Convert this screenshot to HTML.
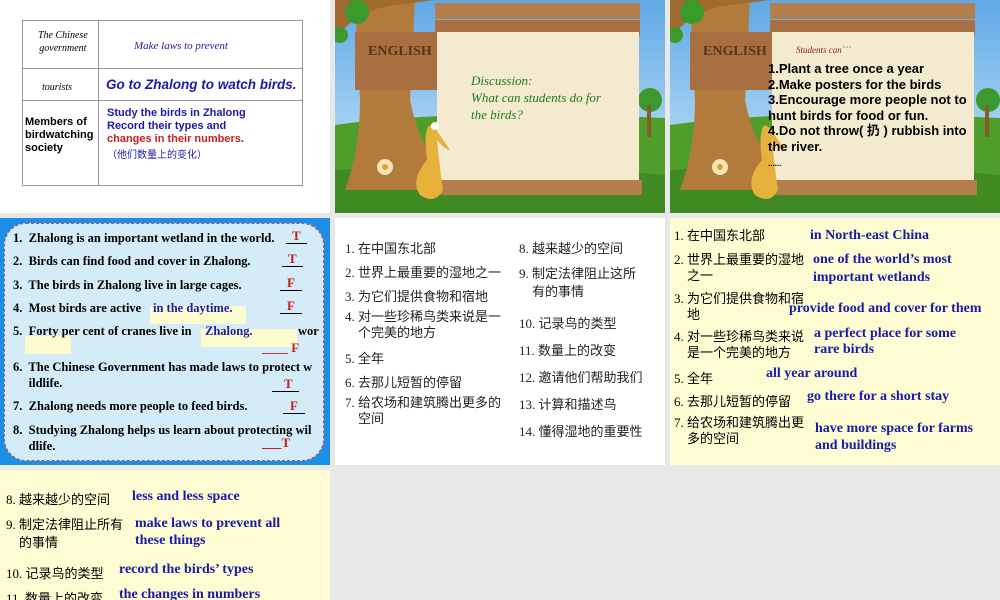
<!DOCTYPE html>
<html><head><meta charset="utf-8">
<style>
*{margin:0;padding:0;box-sizing:border-box}
body{width:1000px;height:600px;background:#e8e8e8;position:relative;overflow:hidden;font-family:"Liberation Serif","Noto Serif CJK SC",serif}
.s{position:absolute;overflow:hidden}
.a{position:absolute;white-space:nowrap}
.cj{font-family:"Liberation Serif","Noto Sans CJK SC",sans-serif}
.b{font-weight:bold;color:#1a1aa8}
</style></head><body>

<div class="s" style="left:0;top:0;width:330px;height:213px;background:#fff">
 <div class="a" style="left:22px;top:20px;width:281px;height:166px;border:1px solid #999"></div>
 <div class="a" style="left:98px;top:20px;width:1px;height:166px;background:#999"></div>
 <div class="a" style="left:22px;top:68px;width:281px;height:1px;background:#999"></div>
 <div class="a" style="left:22px;top:100px;width:281px;height:1px;background:#999"></div>
 <div class="a" style="left:38px;top:29px;font-size:10px;font-style:italic;line-height:13px;text-align:center">The Chinese<br>government</div>
 <div class="a" style="left:134px;top:40px;font-size:11px;font-style:italic;color:#1a1aa8">Make laws to prevent</div>
 <div class="a" style="left:42px;top:82px;font-size:10px;font-style:italic">tourists</div>
 <div class="a" style="left:106px;top:77px;font-size:13.5px;font-style:italic;font-weight:bold;color:#1a1aa8;font-family:'Liberation Sans',sans-serif">Go to Zhalong to watch birds.</div>
 <div class="a" style="left:25px;top:116px;font-size:11px;font-weight:bold;line-height:13px;font-family:'Liberation Sans',sans-serif">Members of<br>birdwatching<br>society</div>
 <div class="a" style="left:107px;top:107px;font-size:11px;font-weight:bold;line-height:13px;color:#1a1aa8;font-family:'Liberation Sans',sans-serif">Study the birds in Zhalong<br>Record their types and<br><span style="color:#c81e1e">changes in their numbers</span>.</div>
 <div class="a cj" style="left:107px;top:146px;font-size:10px;color:#1a1aa8">（他们数量上的变化）</div>
</div>

<div class="s" style="left:335px;top:0;width:330px;height:213px">
<svg width="330" height="213" viewBox="0 0 330 213">
<defs><linearGradient id="sk" x1="0" y1="0" x2="0" y2="1"><stop offset="0" stop-color="#5fa9e6"/><stop offset="1" stop-color="#d5ebf7"/></linearGradient></defs>
<rect width="330" height="213" fill="url(#sk)"/>
<path d="M0 125 Q120 108 330 118 L330 213 L0 213Z" fill="#4f9e2c"/>
<path d="M0 170 Q160 160 330 175 L330 213 L0 213Z" fill="#3f8a22"/>
<circle cx="315" cy="100" r="12" fill="#3b9a2e"/><rect x="312" y="105" width="4" height="32" fill="#8a5a2a"/>
<path d="M20 0 L80 0 L75 100 Q85 150 110 170 L120 190 L10 190 Q25 150 25 100Z" fill="#b27b3c"/>
<path d="M0 40 Q20 10 60 5 L100 0 L0 0Z" fill="#a06a30"/>
<circle cx="22" cy="12" r="12" fill="#3c9a2c"/><circle cx="5" cy="35" r="8" fill="#3c9a2c"/>
<rect x="100" y="3" width="205" height="16" fill="#b37d4c"/><rect x="100" y="20" width="205" height="16" fill="#a87045"/>
<rect x="20" y="32" width="82" height="58" fill="#a86f40"/>
<text x="33" y="55" font-family="Liberation Serif" font-weight="bold" font-size="14" fill="#5a3316">ENGLISH</text>
<rect x="102" y="32" width="202" height="150" fill="#f3ead0"/>
<rect x="105" y="180" width="202" height="15" fill="#b37d4c"/>
<circle cx="50" cy="167" r="8" fill="#f4e6b6"/><circle cx="50" cy="167" r="3" fill="#e0a030"/>
<path d="M95 125 Q88 130 92 160 Q75 180 85 195 Q100 205 108 190 Q105 170 102 140 Q110 150 115 150 L100 128Z" fill="#e6b23c"/>
<circle cx="100" cy="126" r="4" fill="#fff"/>
</svg>
<div class="a" style="left:136px;top:72px;font-size:13px;font-style:italic;color:#1e7a1e;line-height:17px">Discussion:<br>What can students do for<br>the birds?</div>
</div>

<div class="s" style="left:670px;top:0;width:330px;height:213px">
<svg width="330" height="213" viewBox="0 0 330 213">
<rect width="330" height="213" fill="url(#sk)"/>
<path d="M0 125 Q120 108 330 118 L330 213 L0 213Z" fill="#4f9e2c"/>
<path d="M0 170 Q160 160 330 175 L330 213 L0 213Z" fill="#3f8a22"/>
<circle cx="318" cy="100" r="12" fill="#3b9a2e"/><rect x="315" y="105" width="4" height="32" fill="#8a5a2a"/>
<path d="M20 0 L80 0 L75 100 Q85 150 110 170 L120 190 L10 190 Q25 150 25 100Z" fill="#b27b3c"/>
<path d="M0 40 Q20 10 60 5 L100 0 L0 0Z" fill="#a06a30"/>
<circle cx="22" cy="12" r="12" fill="#3c9a2c"/><circle cx="5" cy="35" r="8" fill="#3c9a2c"/>
<rect x="100" y="3" width="205" height="16" fill="#b37d4c"/><rect x="100" y="20" width="205" height="16" fill="#a87045"/>
<rect x="20" y="32" width="82" height="58" fill="#a86f40"/>
<text x="33" y="55" font-family="Liberation Serif" font-weight="bold" font-size="14" fill="#5a3316">ENGLISH</text>
<rect x="102" y="32" width="202" height="150" fill="#f3ead0"/>
<rect x="105" y="180" width="202" height="15" fill="#b37d4c"/>
<circle cx="50" cy="167" r="8" fill="#f4e6b6"/><circle cx="50" cy="167" r="3" fill="#e0a030"/>
<path d="M95 125 Q88 130 92 160 Q75 180 85 195 Q100 205 108 190 Q105 170 102 140 Q110 150 115 150 L100 128Z" fill="#e6b23c"/>
</svg>
<div class="a" style="left:126px;top:45px;font-size:9px;font-style:italic;color:#8a1a1a">Students can&#96;&#96;&#96;</div>
<div class="a" style="left:98px;top:61px;font-size:13px;font-weight:bold;line-height:15.5px;font-family:'Liberation Sans','Noto Sans CJK SC',sans-serif">1.Plant a tree once a year<br>2.Make posters for the birds<br>3.Encourage more people not to<br>hunt birds for food or fun.<br>4.Do not throw( 扔 ) rubbish into<br>the river.<br><span style="font-size:8px">......</span></div>
</div>

<div class="s" style="left:0;top:218px;width:330px;height:247px;background:#1c8ee6">
 <div class="a" style="left:4px;top:5px;width:320px;height:238px;background:#d3ecf8;border:1px dashed #c0504d;border-radius:22px"></div>
 <div class="a" style="left:150px;top:88px;width:96px;height:18px;background:#fdfbd0"></div>
 <div class="a" style="left:201px;top:111px;width:96px;height:18px;background:#fdfbd0"></div>
 <div class="a" style="left:25px;top:118px;width:46px;height:18px;background:#fdfbd0"></div>
 <div class="a" style="left:13px;top:9px;font-size:12.5px;font-weight:bold;line-height:23.3px">1.&nbsp; Zhalong is an important wetland in the world.<br>2.&nbsp; Birds can find food and cover in Zhalong.<br>3.&nbsp; The birds in Zhalong live in large cages.<br>4.&nbsp; Most birds are active <span style="position:absolute;left:140px;color:#1a1aa8">in the daytime.</span><br>5.&nbsp; Forty per cent of cranes live in <span style="position:absolute;left:192px;color:#1a1aa8">Zhalong.</span><span style="position:absolute;left:285px">wor</span></div>
 <div class="a" style="left:13px;top:142px;font-size:12.5px;font-weight:bold;line-height:15.5px">6.&nbsp; The Chinese Government has made laws to protect w<br>&nbsp;&nbsp;&nbsp;&nbsp;&nbsp;ildlife.</div>
 <div class="a" style="left:13px;top:181px;font-size:12.5px;font-weight:bold">7.&nbsp; Zhalong needs more people to feed birds.</div>
 <div class="a" style="left:13px;top:205px;font-size:12.5px;font-weight:bold;line-height:15.5px">8.&nbsp; Studying Zhalong helps us learn about protecting wil<br>&nbsp;&nbsp;&nbsp;&nbsp;&nbsp;dlife.</div>
 <div class="a" style="color:#c81e1e;font-weight:bold;font-size:13px;left:286px;top:10px;border-bottom:1px solid #000;padding:0 6px;line-height:15px">T</div>
 <div class="a" style="color:#c81e1e;font-weight:bold;font-size:13px;left:282px;top:33px;border-bottom:1px solid #000;padding:0 6px;line-height:15px">T</div>
 <div class="a" style="color:#c81e1e;font-weight:bold;font-size:13px;left:280px;top:57px;border-bottom:1px solid #000;padding:0 7px;line-height:15px">F</div>
 <div class="a" style="color:#c81e1e;font-weight:bold;font-size:13px;left:280px;top:80px;border-bottom:1px solid #000;padding:0 7px;line-height:15px">F</div>
 <div class="a" style="color:#c81e1e;font-weight:bold;font-size:13px;left:262px;top:122px;line-height:15px">____ F</div>
 <div class="a" style="color:#c81e1e;font-weight:bold;font-size:13px;left:272px;top:158px;border-bottom:1px solid #000;padding:0 6px 0 12px;line-height:15px">T</div>
 <div class="a" style="color:#c81e1e;font-weight:bold;font-size:13px;left:283px;top:180px;border-bottom:1px solid #000;padding:0 7px;line-height:15px">F</div>
 <div class="a" style="color:#c81e1e;font-weight:bold;font-size:13px;left:262px;top:217px;line-height:15px"><u>&nbsp;&nbsp;&nbsp;&nbsp;&nbsp;&nbsp;</u>T</div>
</div>

<div class="s cj" style="left:335px;top:218px;width:330px;height:247px;background:#fff;font-size:13px;color:#222">
 <div class="a" style="left:10px;top:20px">1. 在中国东北部</div>
 <div class="a" style="left:10px;top:44px">2. 世界上最重要的湿地之一</div>
 <div class="a" style="left:10px;top:68px">3. 为它们提供食物和宿地</div>
 <div class="a" style="left:10px;top:91px;line-height:16px">4. 对一些珍稀鸟类来说是一<br>&nbsp;&nbsp;&nbsp;&nbsp;个完美的地方</div>
 <div class="a" style="left:10px;top:130px">5. 全年</div>
 <div class="a" style="left:10px;top:154px">6. 去那儿短暂的停留</div>
 <div class="a" style="left:10px;top:177px;line-height:16px">7. 给农场和建筑腾出更多的<br>&nbsp;&nbsp;&nbsp;&nbsp;空间</div>
 <div class="a" style="left:184px;top:20px">8. 越来越少的空间</div>
 <div class="a" style="left:184px;top:47px;line-height:18px">9. 制定法律阻止这所<br>&nbsp;&nbsp;&nbsp;&nbsp;有的事情</div>
 <div class="a" style="left:184px;top:95px">10. 记录鸟的类型</div>
 <div class="a" style="left:184px;top:122px">11. 数量上的改变</div>
 <div class="a" style="left:184px;top:149px">12. 邀请他们帮助我们</div>
 <div class="a" style="left:184px;top:176px">13. 计算和描述鸟</div>
 <div class="a" style="left:184px;top:203px">14. 懂得湿地的重要性</div>
</div>

<div class="s" style="left:670px;top:218px;width:330px;height:247px;background:#fdfcd2;font-size:14px">
 <div class="a cj" style="left:4px;top:10px;font-size:13px;line-height:16px">1. 在中国东北部</div>
 <div class="a b" style="left:140px;top:10px">in North-east China</div>
 <div class="a cj" style="left:4px;top:34px;font-size:13px;line-height:16px">2. 世界上最重要的湿地<br>&nbsp;&nbsp;&nbsp;&nbsp;之一</div>
 <div class="a b" style="left:143px;top:33px;line-height:18px">one of the world’s most<br>important wetlands</div>
 <div class="a cj" style="left:4px;top:73px;font-size:13px;line-height:16px">3. 为它们提供食物和宿<br>&nbsp;&nbsp;&nbsp;&nbsp;地</div>
 <div class="a b" style="left:119px;top:83px">provide food and cover for them</div>
 <div class="a cj" style="left:4px;top:111px;font-size:13px;line-height:16px">4. 对一些珍稀鸟类来说<br>&nbsp;&nbsp;&nbsp;&nbsp;是一个完美的地方</div>
 <div class="a b" style="left:144px;top:108px;line-height:16px">a perfect place for some<br>rare birds</div>
 <div class="a cj" style="left:4px;top:150px;font-size:13px">5. 全年</div>
 <div class="a b" style="left:96px;top:148px">all year around</div>
 <div class="a cj" style="left:4px;top:173px;font-size:13px">6. 去那儿短暂的停留</div>
 <div class="a b" style="left:137px;top:171px">go there for a short stay</div>
 <div class="a cj" style="left:4px;top:197px;font-size:13px;line-height:16px">7. 给农场和建筑腾出更<br>&nbsp;&nbsp;&nbsp;&nbsp;多的空间</div>
 <div class="a b" style="left:145px;top:202px;line-height:17px">have more space for farms<br>and buildings</div>
</div>

<div class="s" style="left:0;top:470px;width:330px;height:130px;background:#fdfcd2;font-size:14px">
 <div class="a cj" style="left:6px;top:19px;font-size:13px">8. 越来越少的空间</div>
 <div class="a b" style="left:132px;top:19px">less and less space</div>
 <div class="a cj" style="left:6px;top:46px;font-size:13px;line-height:18px">9. 制定法律阻止所有<br>&nbsp;&nbsp;&nbsp;&nbsp;的事情</div>
 <div class="a b" style="left:135px;top:45px;line-height:17px">make laws to prevent all<br>these things</div>
 <div class="a cj" style="left:6px;top:93px;font-size:13px">10. 记录鸟的类型</div>
 <div class="a b" style="left:119px;top:92px">record the birds’ types</div>
 <div class="a cj" style="left:6px;top:118px;font-size:13px">11. 数量上的改变</div>
 <div class="a b" style="left:119px;top:117px">the changes in numbers</div>
</div>
</body></html>
